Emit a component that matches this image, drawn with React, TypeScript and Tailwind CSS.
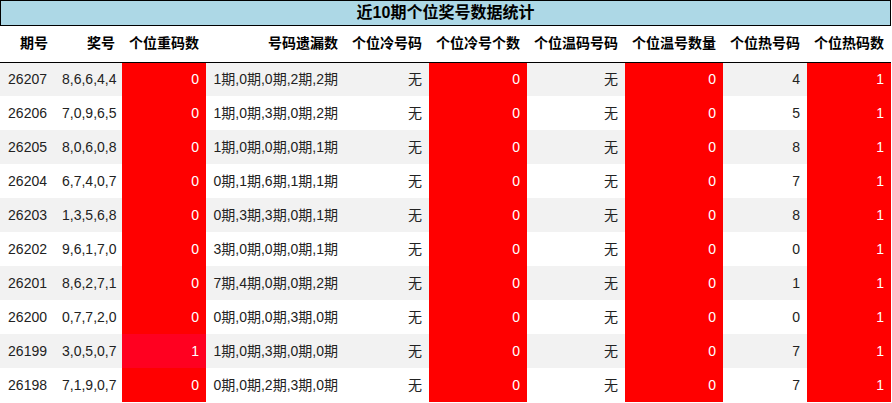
import React from "react";

type Row = {
  qh: string;
  jh: string;
  cm: number;
  yl: string;
  cold: string;
  coldN: number;
  warm: string;
  warmN: number;
  hot: string;
  hotN: number;
  pink?: boolean;
};

const rows: Row[] = [
  { qh: "26207", jh: "8,6,6,4,4", cm: 0, yl: "1期,0期,0期,2期,2期", cold: "无", coldN: 0, warm: "无", warmN: 0, hot: "4", hotN: 1 },
  { qh: "26206", jh: "7,0,9,6,5", cm: 0, yl: "1期,0期,3期,0期,2期", cold: "无", coldN: 0, warm: "无", warmN: 0, hot: "5", hotN: 1 },
  { qh: "26205", jh: "8,0,6,0,8", cm: 0, yl: "1期,0期,0期,0期,1期", cold: "无", coldN: 0, warm: "无", warmN: 0, hot: "8", hotN: 1 },
  { qh: "26204", jh: "6,7,4,0,7", cm: 0, yl: "0期,1期,6期,1期,1期", cold: "无", coldN: 0, warm: "无", warmN: 0, hot: "7", hotN: 1 },
  { qh: "26203", jh: "1,3,5,6,8", cm: 0, yl: "0期,3期,3期,0期,1期", cold: "无", coldN: 0, warm: "无", warmN: 0, hot: "8", hotN: 1 },
  { qh: "26202", jh: "9,6,1,7,0", cm: 0, yl: "3期,0期,0期,0期,1期", cold: "无", coldN: 0, warm: "无", warmN: 0, hot: "0", hotN: 1 },
  { qh: "26201", jh: "8,6,2,7,1", cm: 0, yl: "7期,4期,0期,0期,2期", cold: "无", coldN: 0, warm: "无", warmN: 0, hot: "1", hotN: 1 },
  { qh: "26200", jh: "0,7,7,2,0", cm: 0, yl: "0期,0期,0期,3期,0期", cold: "无", coldN: 0, warm: "无", warmN: 0, hot: "0", hotN: 1 },
  { qh: "26199", jh: "3,0,5,0,7", cm: 1, yl: "1期,0期,3期,0期,0期", cold: "无", coldN: 0, warm: "无", warmN: 0, hot: "7", hotN: 1, pink: true },
  { qh: "26198", jh: "7,1,9,0,7", cm: 0, yl: "0期,0期,2期,3期,0期", cold: "无", coldN: 0, warm: "无", warmN: 0, hot: "7", hotN: 1 },
];

const headers = [
  "期号",
  "奖号",
  "个位重码数",
  "号码遗漏数",
  "个位冷号码",
  "个位冷号个数",
  "个位温码号码",
  "个位温号数量",
  "个位热号码",
  "个位热码数",
];

const widths = [55, 67, 84, 139, 84, 98, 98, 98, 84, 84];

export default function App() {
  return (
    <div
      className="w-[891px] bg-white text-[#222]"
      style={{ fontFamily: '"Liberation Sans", "Noto Sans CJK SC", Arial, sans-serif' }}
    >
      <div className="h-[26px] border border-black bg-[#add8e6] flex items-center justify-center text-[16px] font-bold text-black leading-none">
        近10期个位奖号数据统计
      </div>
      <table className="table-fixed border-collapse w-[891px] text-[14px]">
        <colgroup>
          {widths.map((w, i) => (
            <col key={i} style={{ width: w }} />
          ))}
        </colgroup>
        <thead>
          <tr className="h-[36px] border-b border-black">
            {headers.map((h) => (
              <th key={h} className="text-right font-bold px-[7px] p-0 text-black whitespace-nowrap">
                {h}
              </th>
            ))}
          </tr>
        </thead>
        <tbody>
          {rows.map((r, i) => {
            const bg = i % 2 === 0 ? "bg-[#f2f2f2]" : "bg-white";
            return (
              <tr key={r.qh} className={`h-[34px] ${bg}`}>
                <td className="text-right px-[8px] whitespace-nowrap">{r.qh}</td>
                <td className="text-right px-[7px] whitespace-nowrap">{r.jh}</td>
                <td className={`text-right px-[7px] text-white ${r.pink ? "bg-[#ff0020]" : "bg-[#ff0000]"}`}>{r.cm}</td>
                <td className="text-right px-[7px] whitespace-nowrap">{r.yl}</td>
                <td className="text-right px-[7px]">{r.cold}</td>
                <td className="text-right px-[7px] text-white bg-[#ff0000]">{r.coldN}</td>
                <td className="text-right px-[7px]">{r.warm}</td>
                <td className="text-right px-[7px] text-white bg-[#ff0000]">{r.warmN}</td>
                <td className="text-right px-[7px]">{r.hot}</td>
                <td className="text-right px-[7px] text-white bg-[#ff0000]">{r.hotN}</td>
              </tr>
            );
          })}
        </tbody>
      </table>
    </div>
  );
}
